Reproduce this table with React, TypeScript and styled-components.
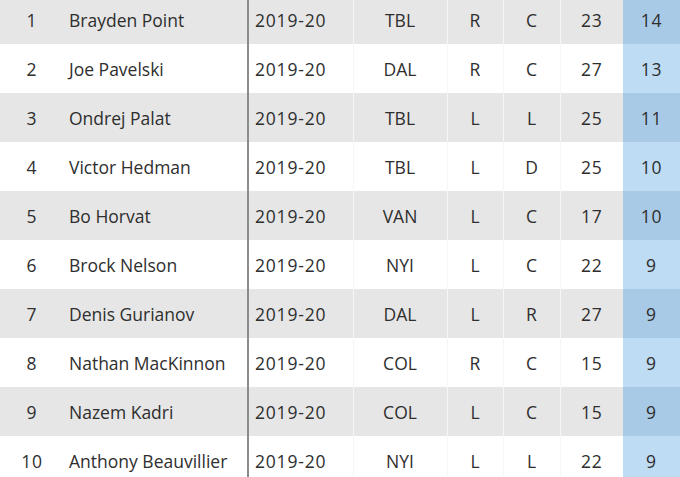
import React from 'react';
import styled, { createGlobalStyle } from 'styled-components';

const GlobalStyle = createGlobalStyle`
  html, body {
    margin: 0;
    padding: 0;
    background: #ffffff;
    overflow: hidden;
  }
`;

const Frame = styled.div`
  width: 680px;
  height: 477px;
  overflow: hidden;
`;

const Table = styled.table`
  margin-top: -5px;
  width: 680px;
  border-collapse: collapse;
  table-layout: fixed;
  font-family: 'Open Sans', 'Liberation Sans', sans-serif;
  font-size: 17.5px;
  color: #2e2e2e;
`;

const Col = styled.col<{ $w: number }>`
  width: ${p => p.$w}px;
`;

const Row = styled.tr<{ $shade: boolean }>`
  height: 49px;
  background: ${p => (p.$shade ? '#e6e6e6' : '#ffffff')};
`;

const Cell = styled.td`
  padding: 0;
  text-align: center;
  border-left: 1px solid rgba(0, 0, 0, 0.035);
  white-space: nowrap;
  overflow: hidden;
`;

const Num = styled(Cell)`
  letter-spacing: 0.8px;
`;

const Rank = styled(Num)`
  border-left: none;
`;

const Name = styled(Cell)`
  text-align: left;
  padding-left: 5px;
  border-left: none;
`;

const Season = styled(Num)`
  text-align: left;
  padding-left: 6px;
  border-left: 2px solid #8c8c8c;
`;

const Score = styled(Num)<{ $shade: boolean }>`
  background: ${p => (p.$shade ? '#a9cae6' : '#bedcf4')};
  border-left: none;
`;

type Player = {
  name: string;
  team: string;
  shoots: string;
  pos: string;
  age: number;
  goals: number;
};

const players: Player[] = [
  { name: 'Brayden Point', team: 'TBL', shoots: 'R', pos: 'C', age: 23, goals: 14 },
  { name: 'Joe Pavelski', team: 'DAL', shoots: 'R', pos: 'C', age: 27, goals: 13 },
  { name: 'Ondrej Palat', team: 'TBL', shoots: 'L', pos: 'L', age: 25, goals: 11 },
  { name: 'Victor Hedman', team: 'TBL', shoots: 'L', pos: 'D', age: 25, goals: 10 },
  { name: 'Bo Horvat', team: 'VAN', shoots: 'L', pos: 'C', age: 17, goals: 10 },
  { name: 'Brock Nelson', team: 'NYI', shoots: 'L', pos: 'C', age: 22, goals: 9 },
  { name: 'Denis Gurianov', team: 'DAL', shoots: 'L', pos: 'R', age: 27, goals: 9 },
  { name: 'Nathan MacKinnon', team: 'COL', shoots: 'R', pos: 'C', age: 15, goals: 9 },
  { name: 'Nazem Kadri', team: 'COL', shoots: 'L', pos: 'C', age: 15, goals: 9 },
  { name: 'Anthony Beauvillier', team: 'NYI', shoots: 'L', pos: 'L', age: 22, goals: 9 },
];

const widths = [64, 184, 105, 94, 56, 57, 63, 57];

const App: React.FC = () => {
  return (
    <Frame>
      <GlobalStyle />
      <Table>
        <colgroup>
          {widths.map((w, i) => (
            <Col key={i} $w={w} />
          ))}
        </colgroup>
        <tbody>
          {players.map((p, i) => {
            const shade = i % 2 === 0;
            return (
              <Row key={p.name} $shade={shade}>
                <Rank>{i + 1}</Rank>
                <Name>{p.name}</Name>
                <Season>2019-20</Season>
                <Cell>{p.team}</Cell>
                <Cell>{p.shoots}</Cell>
                <Cell>{p.pos}</Cell>
                <Num>{p.age}</Num>
                <Score $shade={shade}>{p.goals}</Score>
              </Row>
            );
          })}
        </tbody>
      </Table>
    </Frame>
  );
};

export default App;
